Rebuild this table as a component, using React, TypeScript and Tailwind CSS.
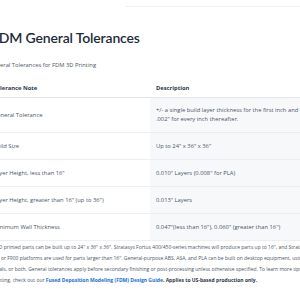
import React from 'react';

const rows = [
  {
    note: 'General Tolerance',
    desc: '+/- a single build layer thickness for the first inch and +/- .002" for every inch thereafter.',
    tall: true,
  },
  { note: 'Build Size', desc: 'Up to 24" x 36" x 36"' },
  { note: 'Layer Height, less than 16"', desc: '0.010" Layers (0.008" for PLA)' },
  { note: 'Layer Height, greater than 16" (up to 36")', desc: '0.013" Layers' },
  { note: 'Minimum Wall Thickness', desc: '0.047"(less than 16"), 0.060" (greater than 16")' },
];

const App: React.FC = () => {
  return (
    <div className="w-[300px] h-[300px] overflow-hidden bg-white font-['Open_Sans',sans-serif]">
      <div className="-ml-[17px] w-[460px]">
        {/* tab strip edge */}
        <div className="ml-[142px] mt-[6px] border-t border-[#f1f2f4]" />

        <h2 className="ml-[8px] mt-[21px] text-[14px] leading-[20px] tracking-[-0.15px] font-semibold text-[#1c2b3a] font-['Lato',sans-serif]">
          FDM General Tolerances
        </h2>
        <p className="ml-[6px] mt-[13px] text-[5.8px] leading-[9px] text-[#4b5563]">
          General Tolerances for FDM 3D Printing
        </p>

        {/* table */}
        <div className="ml-[4px] mt-[10px] w-[335px] text-[5.8px] leading-[9px]">
          <div className="grid grid-cols-[163px_172px] h-[18px] border-b border-[#e3e6ea]">
            <div className="flex items-center px-[6px] font-bold text-[#2d3748]">Tolerance Note</div>
            <div className="flex items-center px-[6px] font-bold text-[#2d3748]">Description</div>
          </div>
          {rows.map((r) => (
            <div
              key={r.note}
              className={`grid grid-cols-[163px_172px] border-b border-[#eceef1] ${r.tall ? 'h-[35px]' : 'h-[27px]'}`}
            >
              <div className="flex items-center px-[6px] text-[#4b5563]">{r.note}</div>
              <div className="flex items-center px-[6px] text-[#4b5563] bg-[#f7f8fa]">{r.desc}</div>
            </div>
          ))}
        </div>

        <p className="ml-[1px] mt-[1px] text-[5px] leading-[11px] text-[#4b5563] whitespace-nowrap">
          FDM 3D printed parts can be built up to 24" x 36" x 36". Stratasys Fortus 400/450-series machines will produce parts up to 16", and Stratasys Fortus
          <br />
          900mc or F900 platforms are used for parts larger than 16". General-purpose ABS, ASA, and PLA can be built on desktop equipment, using general-purpose
          <br />
          materials, or both. General tolerances apply before secondary finishing or post-processing unless otherwise specified. To learn more tips about
          <br />
          3D printing, check out our{' '}
          <a href="#" className="font-bold text-[#1b6ed6]">
            Fused Deposition Modeling (FDM) Design Guide
          </a>
          <span className="font-bold text-[#2d3748]">. Applies to US-based production only.</span>
        </p>
      </div>
    </div>
  );
};

export default App;
